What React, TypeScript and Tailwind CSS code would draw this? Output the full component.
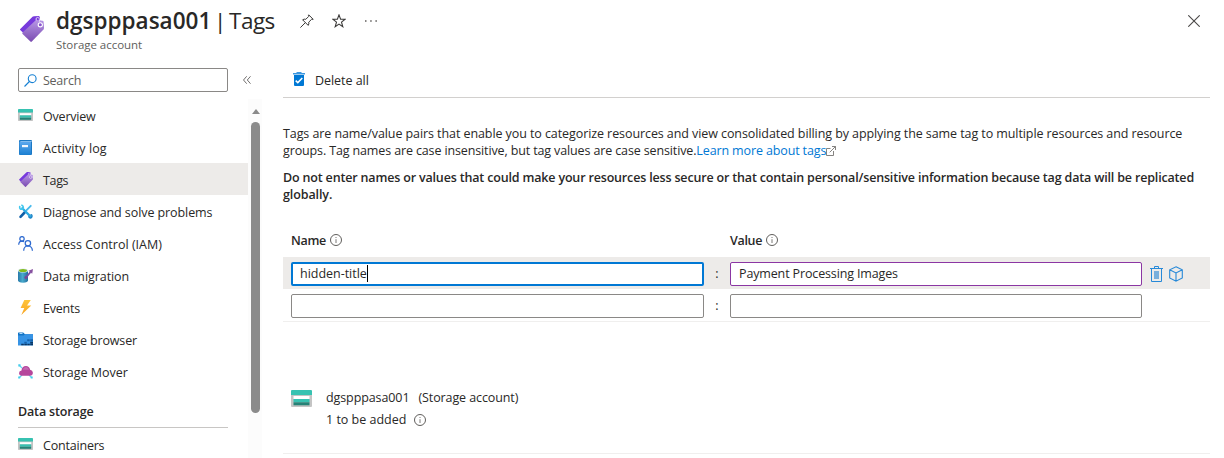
import type { ReactNode } from "react";

function TagIcon({ className }: { className: string }) {
  return (
    <svg viewBox="0 0 24 26" className={className}>
      <defs>
        <linearGradient id="tagBody" x1="0" y1="0" x2="0" y2="1">
          <stop offset="0" stopColor="#b796e6" />
          <stop offset="1" stopColor="#7a4bb0" />
        </linearGradient>
      </defs>
      <path d="M0 13.200 12.500.8Q13 .2 14 .2L18.500 0q1 0 1.200 1l.6 5L4.500 18 .2 14Q-.1 13.600 0 13.200Z" fill="#773adc" />
      <path d="M2.600 16.500 15.500 4.500q.6-.5 1.400-.5l5.600.7q1 .2 1.100 1.100L24 12q0 .9-.5 1.500L11.800 25.600q-.7.6-1.400 0L2.600 17.900q-.7-.7 0-1.400Z" fill="url(#tagBody)" />
      <circle cx="20.300" cy="8.800" r="2.100" fill="#8a55cf" stroke="#fff" strokeWidth="1.100" />
      <path d="M16.200 4.500q-.8-2.900 1.300-3.100 2.300 0 1.900 4.300" fill="none" stroke="#e8dcf8" strokeWidth="1" />
    </svg>
  );
}

function StorageIcon({ className }: { className: string }) {
  return (
    <svg viewBox="0 0 21 17" preserveAspectRatio="none" className={className}>
      <path d="M0 4h21v12q0 1-1 1H1q-1 0-1-1Z" fill="#c4c4c4" />
      <path d="M1 0h19q1 0 1 1v4H0V1q0-1 1-1Z" fill="#37c2b1" />
      <path d="M2.500 6h16v3h-16Z" fill="#fff" />
      <path d="M2.500 9h16v3.300h-16Z" fill="#37c2b1" />
      <path d="M2.500 12.300h16v3h-16Z" fill="#258277" />
    </svg>
  );
}

function BookIcon() {
  return (
    <svg viewBox="0 0 15 15" className="size-[15px]">
      <defs>
        <linearGradient id="book" x1="0" y1="0" x2="0" y2="1">
          <stop offset="0" stopColor="#5ea9ee" />
          <stop offset="1" stopColor="#1c80d2" />
        </linearGradient>
      </defs>
      <rect x="1" y="0" width="13" height="15" rx="1" fill="#1b78c4" />
      <rect x="2.500" y="1" width="11" height=".8" fill="#cfe5f8" />
      <rect x="1.500" y="1.500" width="11.500" height="13.200" rx=".6" fill="url(#book)" />
      <rect x="4" y="5" width="6" height="2.200" fill="#f3f8fd" />
    </svg>
  );
}

function ToolsIcon() {
  return (
    <svg viewBox="0 0 15 15" className="size-[15px]" fill="none" strokeLinecap="round">
      <path d="M12.800 1.800 8.600 6.200" stroke="#45b9ec" strokeWidth="1.800" />
      <path d="M6.600 8.500 2.500 12.800" stroke="#0f5fa8" strokeWidth="2.600" />
      <path d="m4.300 4.300 8.300 8.300" stroke="#2aa9e2" strokeWidth="2.300" />
      <path d="M1.700 2.500Q1.300 5.400 4 5.300 6 4.700 5 2.300L3.900 1.200" stroke="#42c8ee" strokeWidth="1.600" />
      <path d="M10.800 12.800q1.500 2.200 3 .2.700-1.500-.7-2.300" stroke="#1d84c7" strokeWidth="1.400" />
    </svg>
  );
}

function PeopleIcon() {
  return (
    <svg viewBox="0 0 15 15" className="size-[15px]" fill="none" stroke="#2f6bd0" strokeWidth="1.250">
      <circle cx="4" cy="2.800" r="2.200" />
      <path d="M.7 8.800Q.8 5.300 4 5.200q1.200 0 2 .6" />
      <circle cx="9.900" cy="7.200" r="2.700" />
      <path d="M5.700 14.700q.1-4.600 4.200-4.700 4.200.1 4.500 4.700" />
    </svg>
  );
}

function MigrationIcon() {
  return (
    <svg viewBox="0 0 15 15" className="size-[15px]">
      <defs>
        <linearGradient id="drum" x1="0" x2="1">
          <stop offset="0" stopColor="#2779a8" />
          <stop offset=".45" stopColor="#48a9cc" />
          <stop offset="1" stopColor="#226f9e" />
        </linearGradient>
      </defs>
      <path d="M0 2.200v10.400q0 1.900 5 2.100 5-.2 5-2.100V2.200Z" fill="url(#drum)" />
      <ellipse cx="5" cy="2.500" rx="5" ry="2" fill="#dceaf0" />
      <ellipse cx="5" cy="2.500" rx="4" ry="1.500" fill="#80bb1c" />
      <path d="M8 9.500 12.500 4" stroke="#7a4da0" strokeWidth="1.900" fill="none" />
      <path d="M10.500 2.700 15 1l-.8 4.800Z" fill="#87519f" />
      <circle cx="7.900" cy="9.500" r="1.500" fill="#774698" />
    </svg>
  );
}

function BoltIcon() {
  return (
    <svg viewBox="0 0 15 15" className="size-[15px]">
      <defs>
        <linearGradient id="bolt" x1="0" y1="0" x2="0" y2="1">
          <stop offset="0" stopColor="#fec43a" />
          <stop offset="1" stopColor="#f8a525" />
        </linearGradient>
      </defs>
      <path d="M6.300 0h6.500L9 5.600h4.300L3.300 15l3-6.900H2.600Z" fill="url(#bolt)" />
    </svg>
  );
}

function BrowserIcon() {
  return (
    <svg viewBox="0 0 15 15" className="size-[15px]">
      <path d="M.5.5h4.700L7 2.300h8v11H0V1Q0 .5.5.5Z" fill="#1374c5" />
      <path d="M0 3.500h5.500L7 2.300h8v11H0Z" fill="#3693e5" />
      <path d="M1.500 1.500h3" stroke="#b5dcfa" strokeWidth="1" />
      <path d="M9.200 7.300h2.500v2H9.200ZM12.200 7.300H15v2h-2.800ZM6.300 9.800h2.500v1.700H6.300Z" fill="#1764ae" />
      <path d="M12.200 9.700H15v1.800h-2.800ZM3.200 11.700h2.600v1.600H3.200ZM6.300 11.700h2.600v1.600H6.300ZM9.300 11.700h2.500v1.600H9.300ZM12.200 11.700H15v1.600h-2.800Z" fill="#0b3765" />
    </svg>
  );
}

function MoverIcon() {
  return (
    <svg viewBox="0 0 15 15" className="size-[15px]">
      <path d="M1.500 1.500 4 4M1.500 13.500 4 11M13.500 13.500 11 11" stroke="#63d6ef" strokeWidth="1.200" />
      <path d="M.3.300h2.200v2.200H.3ZM.2 12.500h2v2h-2ZM12.700 12.500h2v2h-2Z" fill="#45cdec" />
      <path d="M3.500 11.800Q1 11.500 1 9.200q.1-2.200 2.500-2.600Q3.900 2.200 8 2.100q3.200.1 4.100 3.700 2.700.6 2.800 3-.1 2.900-3.100 3Z" fill="#b6469b" />
      <path d="M4.700 5.700Q5.500 3 8 3q2.300.1 3 2.800Z" fill="#c268b2" />
    </svg>
  );
}

function InfoIcon() {
  return (
    <svg viewBox="0 0 12 12" className="size-3 shrink-0">
      <circle cx="6" cy="6" r="5.500" fill="none" stroke="#605e5c" strokeWidth="1" />
      <path d="M6 5.200V9M6 3v1" stroke="#7a7876" strokeWidth="1" />
    </svg>
  );
}

function NavItem({ icon, label, tracking, active }: { icon: ReactNode; label: string; tracking: string; active?: boolean }) {
  return (
    <li className={active ? "flex h-8 items-center bg-[#edebe9] pl-[18px]" : "flex h-8 items-center pl-[18px]"}>
      <span className="flex h-[17px] w-[25px] items-start pt-px">{icon}</span>
      <span className={`pt-[2px] ${tracking}`}>{label}</span>
    </li>
  );
}

export default function App() {
  return (
    <div className="flex h-[458px] w-[1224px] flex-col overflow-hidden bg-white font-['Open_Sans','Noto_Sans',sans-serif] text-[12.5px] leading-[17px] text-[#292827]">
      <header className="flex h-[60px] shrink-0 items-start pl-5">
        <TagIcon className="mt-4 h-[26px] w-6" />
        <div className="ml-3 w-[220px] whitespace-nowrap">
          <h1 className="mt-[7px] flex text-[22.5px] leading-7 font-normal">
            <span className="w-[158px] font-semibold tracking-[0.02px]">dgspppasa001</span>
            <span className="w-[15px]">|</span>
            <span className="tracking-[-0.5px]">Tags</span>
          </h1>
          <p className="mt-[2px] text-[11.5px] leading-4 tracking-[-0.03px] text-[#605e5c]">Storage account</p>
        </div>
        <svg viewBox="0 0 14 14" className="mt-[14px] ml-6 size-[14px]" fill="none" stroke="#3b3a39" strokeWidth="1">
          <path d="m8.700.8 4.500 4.500-1 .2-.6-.2-2.900 2.900q.6 1.700-.5 3.200L2.600 5.800q1.500-1.100 3.200-.5l2.900-2.900-.3-.6ZM5.300 8.700.4 13.600" />
        </svg>
        <svg viewBox="0 0 14 14" className="mt-[14px] ml-[18px] size-[14px]" fill="none" stroke="#3b3a39" strokeWidth="1.100">
          <path d="m7 .9 1.600 4.300 4.500.1-3.600 2.800 1.300 4.600L7 10.100l-3.800 2.600 1.300-4.600L.9 5.300l4.500-.1Z" />
        </svg>
        <svg viewBox="0 0 12 2" className="mt-5 ml-[19px] h-[2px] w-3" fill="#605e5c">
          <path d="M0 .3h1.500v1.400H0ZM5.200.3h1.500v1.400H5.200ZM10.400.3h1.500v1.400h-1.500Z" />
        </svg>
        <svg viewBox="0 0 12 12" className="mt-[15px] mr-6 ml-auto size-3" stroke="#4a4948" strokeWidth="1.100">
          <path d="m.3.3 11.400 11.400M11.700.3.3 11.700" />
        </svg>
      </header>

      <div className="flex min-h-0 grow">
        <aside className="w-[262px] shrink-0">
          <div className="flex h-[39px] items-start pt-2 pl-[18px]">
            <div className="flex h-6 w-[210px] items-center rounded-[2px] border border-[#8a8886] pl-[5px] text-[#605e5c]">
              <svg viewBox="0 0 13 13" className="size-[13px]" fill="none" stroke="#1680d3" strokeWidth="1.100">
                <circle cx="8.200" cy="4.700" r="3.900" />
                <path d="M5.400 7.500.5 12.500" />
              </svg>
              <span className="ml-[6px] tracking-[-0.25px]">Search</span>
            </div>
            <svg viewBox="0 0 8 8" className="mt-2 ml-[15px] size-2" fill="none" stroke="#605e5c" strokeWidth=".9">
              <path d="M3.700.3.500 4l3.200 3.700M7.500.3 4.300 4l3.200 3.700" />
            </svg>
          </div>
          <div className="flex h-[359px]">
            <nav className="w-[248px]">
              <ul>
                <NavItem icon={<StorageIcon className="mt-px h-3 w-[15px]" />} label="Overview" tracking="tracking-[-0.2px]" />
                <NavItem icon={<BookIcon />} label="Activity log" tracking="tracking-[0.12px]" />
                <NavItem icon={<TagIcon className="ml-px h-[15px] w-[14px]" />} label="Tags" tracking="tracking-[-0.35px]" active />
                <NavItem icon={<ToolsIcon />} label="Diagnose and solve problems" tracking="tracking-[-0.08px]" />
                <NavItem icon={<PeopleIcon />} label="Access Control (IAM)" tracking="tracking-[0.02px]" />
                <NavItem icon={<MigrationIcon />} label="Data migration" tracking="tracking-[-0.06px]" />
                <NavItem icon={<BoltIcon />} label="Events" tracking="tracking-[-0.2px]" />
                <NavItem icon={<BrowserIcon />} label="Storage browser" tracking="tracking-[-0.13px]" />
                <NavItem icon={<MoverIcon />} label="Storage Mover" tracking="tracking-[-0.02px]" />
              </ul>
              <h2 className="ml-[18px] h-[41px] w-[210px] border-b border-[#c8c6c4] pt-4 font-semibold tracking-[-0.15px]">Data storage</h2>
              <ul>
                <NavItem icon={<StorageIcon className="mt-px h-3 w-[15px]" />} label="Containers" tracking="tracking-[-0.2px]" />
              </ul>
            </nav>
            <div className="flex w-[14px] flex-col items-center bg-[#fcfcfc] pt-[10px]">
              <svg viewBox="0 0 8 5" className="ml-px h-[5px] w-2" fill="#8a8a8a">
                <path d="M4 0 8 5H0Z" />
              </svg>
              <div className="mt-2 ml-px h-[291px] w-[9px] rounded-full bg-[#8b8b8b]" />
            </div>
          </div>
        </aside>

        <main className="ml-[21px] w-[927px]">
          <div className="flex h-[38px] items-start border-b border-[#d2d0ce] pt-3">
            <svg viewBox="0 0 12 14" className="ml-[10px] h-[14px] w-3">
              <path d="M0 1h3.500V0h5v1H12v1.500H0Z" fill="#3c97df" />
              <path d="M1 3h10v10q0 1-1 1H2q-1 0-1-1Z" fill="#0078d4" />
              <path d="m2.700 8.600 2.100 2 4.500-4.700" fill="none" stroke="#fff" strokeWidth="1.500" />
            </svg>
            <span className="ml-[10px] tracking-[-0.05px]">Delete all</span>
          </div>
          <div className="h-[132px] pt-[27px] whitespace-nowrap">
            <p className="tracking-[-0.083px]">Tags are name/value pairs that enable you to categorize resources and view consolidated billing by applying the same tag to multiple resources and resource</p>
            <p className="flex items-center tracking-[-0.13px]">
              <span>groups. Tag names are case insensitive, but tag values are case sensitive.</span>
              <a className="text-[#0078d4]">Learn more about tags</a>
              <svg viewBox="0 0 10 10" className="size-[10px]" fill="none" stroke="#777573" strokeWidth=".9">
                <path d="M4.500 2.500h-4v7h7V5M6 .5h3.500V4M9.500.5 3.700 6.300" />
              </svg>
            </p>
            <p className="mt-[10px] font-semibold tracking-[-0.168px]">Do not enter names or values that could make your resources less secure or that contain personal/sensitive information because tag data will be replicated</p>
            <p className="font-semibold tracking-[-0.1px]">globally.</p>
          </div>
          <div className="flex h-[27px] pt-[1px] pl-2 font-semibold tracking-[-0.3px]">
            <div className="flex h-[18px] w-[439px] items-center gap-1"><span>Name</span><InfoIcon /></div>
            <div className="flex h-[18px] items-center gap-1"><span>Value</span><InfoIcon /></div>
          </div>
          <div className="flex h-8 items-center bg-[#edebe9] pt-[2px] pl-2">
            <div className="flex h-6 w-[413px] items-center rounded-[2px] border-2 border-[#0078d4] bg-white pb-px pl-[7px] tracking-[-0.02px]">
              <span>hidden-title</span><i className="h-[17px] w-px bg-black" />
            </div>
            <span className="w-[26px] pb-px text-center">:</span>
            <div className="flex h-6 w-[412px] items-center rounded-[2px] border border-[#8b36a3] bg-white pb-px pl-2 tracking-[-0.14px]">Payment Processing Images</div>
            <svg viewBox="0 0 13 16" className="ml-[8px] h-4 w-[13px]" fill="none" stroke="#2789d8">
              <path d="M0 2.500h13M4.500 2V.5h4V2M1.500 3v12.500h10V3" />
              <path d="M4 5h5v8H4Z" fill="#79afdc" stroke="none" />
            </svg>
            <svg viewBox="0 0 14 16" className="ml-[6px] h-4 w-[14px]" fill="none" stroke="#2789d8" strokeWidth="1.100">
              <path d="m7 .8 6.300 3v8.100L7 15.200.7 11.900V3.800ZM.7 3.800 7 7l6.300-3.200M7 7v8.200" />
            </svg>
          </div>
          <div className="flex h-[33px] items-center border-b border-[#f0efee] pt-[2px] pl-2">
            <div className="h-6 w-[413px] rounded-[2px] border border-[#8a8886]" />
            <span className="w-[26px] pb-px text-center">:</span>
            <div className="h-6 w-[412px] rounded-[2px] border border-[#8a8886]" />
          </div>
          <section className="flex h-[132px] border-b border-[#f0efee] pt-[67px] pl-2">
            <StorageIcon className="mt-[1px] h-[17px] w-[21px]" />
            <div className="ml-[14px] tracking-[-0.1px]">
              <div className="flex gap-[9px]"><span>dgspppasa001</span><span>(Storage account)</span></div>
              <div className="mt-[5px] flex items-center gap-2 tracking-[0px]"><span>1 to be added</span><InfoIcon /></div>
            </div>
          </section>
        </main>
      </div>
    </div>
  );
}
